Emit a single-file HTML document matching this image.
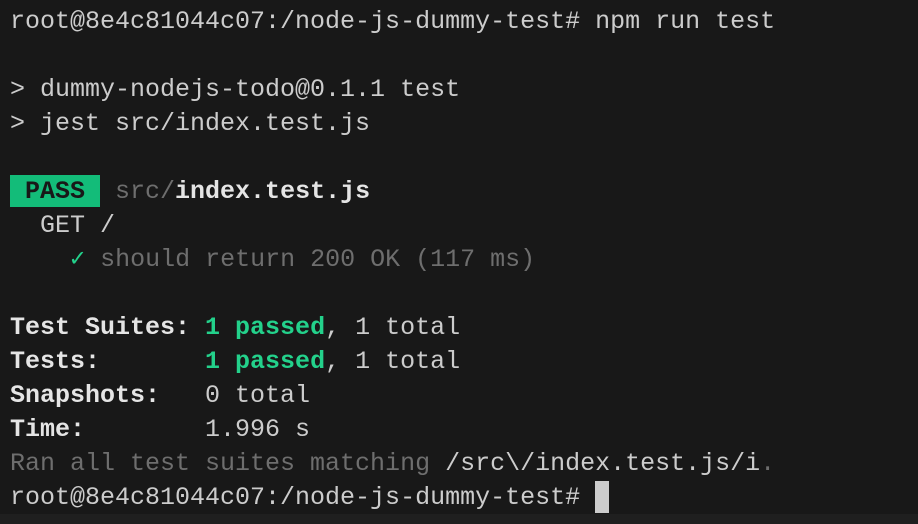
<!DOCTYPE html>
<html><head><meta charset="utf-8"><style>
html,body{margin:0;padding:0;background:#181818;width:918px;height:524px;overflow:hidden}
pre{margin:0;position:absolute;left:10px;top:5px;font-family:"Liberation Mono",monospace;font-size:25px;line-height:34px;color:#cccccc;letter-spacing:0}
.g{color:#6e6e6e}.b{font-weight:bold;color:#e5e5e5}.gr{color:#23d18b;font-weight:bold}
.pass{background:#13bc79;color:#181818;font-weight:bold;display:inline-block;height:32px;line-height:34px}
.ck{color:#23d18b}
.cur{display:inline-block;width:14px;height:32px;background:#cccccc;vertical-align:top;margin-top:0px}
.strip{position:absolute;left:0;top:514px;width:918px;height:10px;background:#1f1f1f}
</style></head><body>
<pre>root@8e4c81044c07:/node-js-dummy-test# npm run test

&gt; dummy-nodejs-todo@0.1.1 test
&gt; jest src/index.test.js

<span class="pass"> PASS </span> <span class="g">src/</span><span class="b">index.test.js</span>
  GET /
    <span class="ck">✓</span> <span class="g">should return 200 OK (117 ms)</span>

<span class="b">Test Suites: </span><span class="gr">1 passed</span>, 1 total
<span class="b">Tests:       </span><span class="gr">1 passed</span>, 1 total
<span class="b">Snapshots:   </span>0 total
<span class="b">Time:        </span>1.996 s
<span class="g">Ran all test suites matching </span>/src\/index.test.js/i<span class="g">.</span>
root@8e4c81044c07:/node-js-dummy-test# <span class="cur"></span></pre>
<div class="strip"></div>
</body></html>
